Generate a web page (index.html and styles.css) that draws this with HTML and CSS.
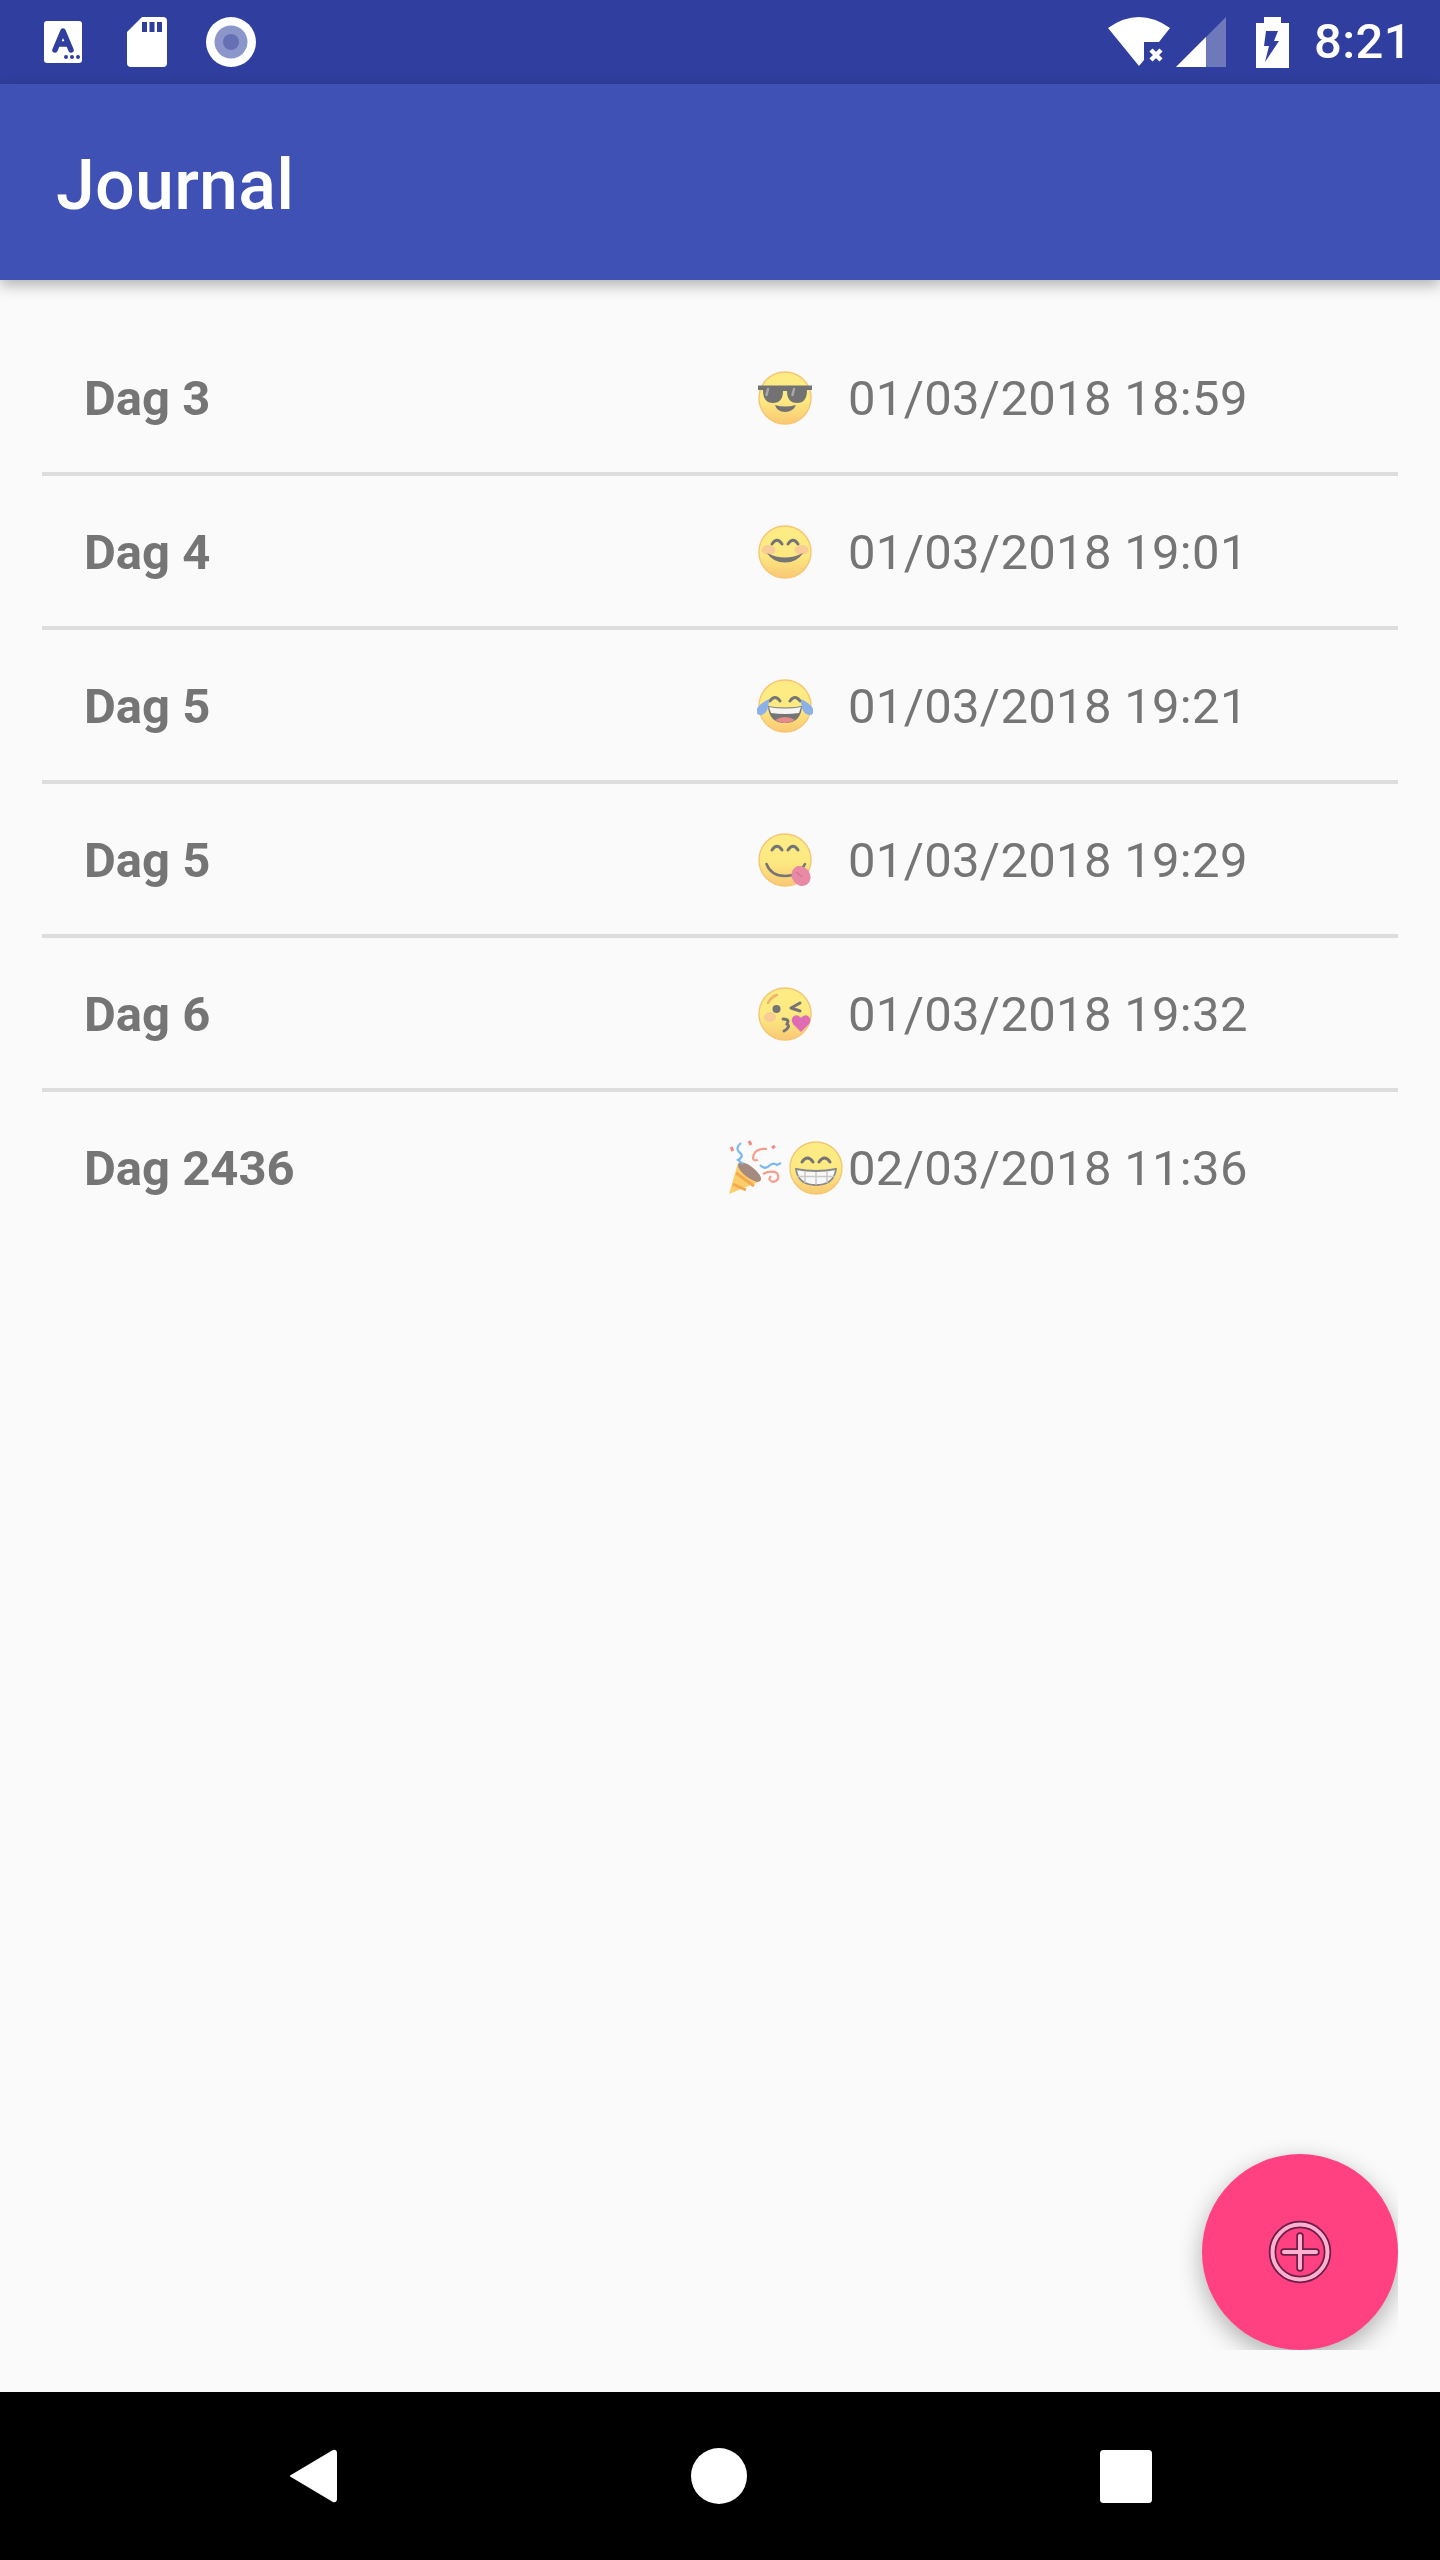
FILE: index.html
```html
<!DOCTYPE html>
<html>
<head>
    <meta charset="UTF-8" />
    <title>Journal</title>
    <link rel="stylesheet" href="styles.css">
</head>
<body>
    <svg class="defs" width="0" height="0">
        <defs>
            <linearGradient id="skin" x1="0" y1="0" x2="0" y2="1">
                <stop offset="0" stop-color="#fdec85"/>
                <stop offset="0.55" stop-color="#fde981"/>
                <stop offset="1" stop-color="#f9c873"/>
            </linearGradient>
            <symbol id="face" viewBox="0 0 56 56">
                <circle cx="28" cy="28" r="26" fill="url(#skin)" stroke="#f6c574" stroke-width="1.4"/>
            </symbol>
        </defs>
    </svg>

    <div id="phone">
        <div class="status-bar">
            <div class="status-left">
                <!-- keyboard -->
                <svg class="ic-kbd" width="38" height="42" viewBox="0 0 38 42">
                    <rect width="38" height="42" rx="3" fill="#fff"/>
                    <path d="M11 29 L19 10 L27 29 M14 23 H24" fill="none" stroke="#303f9f" stroke-width="5.5" stroke-linecap="round" stroke-linejoin="round"/>
                    <circle cx="22" cy="36" r="2" fill="#303f9f"/>
                    <circle cx="28" cy="36" r="2" fill="#303f9f"/>
                    <circle cx="34" cy="36" r="2" fill="#303f9f"/>
                </svg>
                <!-- sd card -->
                <svg class="ic-sd" width="40" height="50" viewBox="0 0 40 50">
                    <path d="M15 0 H36 Q40 0 40 4 V46 Q40 50 36 50 H4 Q0 50 0 46 V15 Z" fill="#fff"/>
                    <rect x="15" y="5" width="5" height="10" fill="#303f9f"/>
                    <rect x="22.500" y="5" width="5" height="10" fill="#303f9f"/>
                    <rect x="30" y="5" width="5" height="10" fill="#303f9f"/>
                </svg>
                <!-- record -->
                <svg class="ic-rec" width="50" height="50" viewBox="0 0 50 50">
                    <circle cx="25" cy="25" r="25" fill="#fff"/>
                    <circle cx="25" cy="25" r="16.500" fill="#8c96cb"/>
                    <circle cx="25" cy="25" r="8" fill="#6570b5"/>
                </svg>
            </div>
            <div class="status-right">
                <!-- wifi -->
                <svg width="62" height="50" viewBox="0 0 62 50">
                    <path d="M0 11 Q31 -11 62 11 L51 25 H36 V43 L31 49 Z" fill="#fff"/>
                    <path d="M43 33 L53 43 M53 33 L43 43" stroke="#fff" stroke-width="4.500"/>
                </svg>
                <!-- signal -->
                <svg class="ic-signal" width="50" height="50" viewBox="0 0 50 50">
                    <path d="M0 50 L50 0 V50 Z" fill="#fff" fill-opacity="0.3"/>
                    <path d="M0 50 L30 20 V50 Z" fill="#fff"/>
                </svg>
                <!-- battery -->
                <svg class="ic-batt" width="33" height="51" viewBox="0 0 33 51">
                    <path d="M8 0 H25 V6 H33 V51 H0 V6 H8 Z" fill="#fff"/>
                    <path d="M10 14 H22 L18 24 H23 L9 45 L13 29 H8 Z" fill="#303f9f"/>
                </svg>
                <span class="clock">8:21</span>
            </div>
        </div>

        <div class="app-bar">Journal</div>

        <div class="main">
            <div class="list">
                <div class="entry">
                    <span class="entry-title">Dag 3</span>
                    <span class="entry-mood">
                        <svg width="56" height="56" viewBox="0 0 56 56">
                            <use href="#face" width="56" height="56"/>
                            <path d="M1 15.500 H55 V20 H50 Q50 33 40 33 Q30 33 30 21 H26 Q26 33 16 33 Q6 33 6 20 H1 Z" fill="#727272"/>
                            <path d="M11 19 Q10 23 9.500 25 M37 19 Q36 23 35.500 25" stroke="#a8a8a8" stroke-width="2.500" fill="none" stroke-linecap="round"/>
                            <path d="M18 35 Q28 38 39 35 Q36 42 28 42 Q20 42 18 35 Z" fill="#727272"/>
                        </svg>
                    </span>
                    <span class="entry-date">01/03/2018 18:59</span>
                </div>
                <div class="entry">
                    <span class="entry-title">Dag 4</span>
                    <span class="entry-mood">
                        <svg width="56" height="56" viewBox="0 0 56 56">
                            <use href="#face" width="56" height="56"/>
                            <ellipse cx="11.500" cy="26" rx="7" ry="5" fill="#f7bfa0" opacity="0.7"/>
                            <ellipse cx="44.500" cy="26" rx="7" ry="5" fill="#f7bfa0" opacity="0.7"/>
                            <path d="M15 20 Q20 12.500 25 20 M31 20 Q36 12.500 41 20" stroke="#757575" stroke-width="3" fill="none" stroke-linecap="round"/>
                            <path d="M10 29 Q28 38 46 29 Q40 38.500 28 38.500 Q16 38.500 10 29 Z" fill="#757575"/>
                        </svg>
                    </span>
                    <span class="entry-date">01/03/2018 19:01</span>
                </div>
                <div class="entry">
                    <span class="entry-title">Dag 5</span>
                    <span class="entry-mood">
                        <svg width="56" height="56" viewBox="0 0 56 56">
                            <use href="#face" width="56" height="56"/>
                            <path d="M13 23 Q18 16 23 23 M33 23 Q38 16 43 23" stroke="#757575" stroke-width="3" fill="none" stroke-linecap="round"/>
                            <path d="M11 28 Q28 31 45 28 Q44 45 28 45 Q12 45 11 28 Z" fill="#757575"/>
                            <path d="M12 29 Q28 32 44 29 L42 35 Q28 37 14 35 Z" fill="#f5f5f5"/>
                            <path d="M18 42 Q28 36 38 42 Q33 45 28 45 Q23 45 18 42 Z" fill="#e88a8a"/>
                            <path d="M12 21 Q3 25 -1 32 Q-1 37 4 37 Q12 36 12 21 Z" fill="#8bb0ea"/>
                            <path d="M44 21 Q53 25 57 32 Q57 37 52 37 Q44 36 44 21 Z" fill="#8bb0ea"/>
                        </svg>
                    </span>
                    <span class="entry-date">01/03/2018 19:21</span>
                </div>
                <div class="entry">
                    <span class="entry-title">Dag 5</span>
                    <span class="entry-mood">
                        <svg width="56" height="56" viewBox="0 0 56 56">
                            <use href="#face" width="56" height="56"/>
                            <path d="M15 18 Q20 10.500 25 18 M31 18 Q36 10.500 41 18" stroke="#757575" stroke-width="3" fill="none" stroke-linecap="round"/>
                            <path d="M9.500 32 Q14 44 28 44 Q42 44 48 32" stroke="#757575" stroke-width="2.500" fill="none" stroke-linecap="round"/>
                            <ellipse cx="44" cy="44" rx="9" ry="10.500" transform="rotate(-35 44 44)" fill="#e88aa6"/>
                            <path d="M39 40 L45 45" stroke="#d87595" stroke-width="1.500"/>
                        </svg>
                    </span>
                    <span class="entry-date">01/03/2018 19:29</span>
                </div>
                <div class="entry">
                    <span class="entry-title">Dag 6</span>
                    <span class="entry-mood">
                        <svg width="56" height="56" viewBox="0 0 56 56">
                            <use href="#face" width="56" height="56"/>
                            <ellipse cx="13" cy="31" rx="6" ry="5" fill="#f7bfa0" opacity="0.7"/>
                            <path d="M11 17 Q14 11 20 9" stroke="#f2b26a" stroke-width="2.500" fill="none" stroke-linecap="round"/>
                            <circle cx="19.500" cy="23" r="4" fill="#757575"/>
                            <path d="M43 17 L34 22 L43 25" stroke="#757575" stroke-width="3" fill="none" stroke-linecap="round" stroke-linejoin="round"/>
                            <path d="M26 33 Q33 33 30 38 Q34 41 27 45" stroke="#757575" stroke-width="3" fill="none" stroke-linecap="round"/>
                            <path d="M44 46 L36 38 Q33 33 37 30 Q41 28 44 32 Q47 28 51 30 Q55 33 52 38 Z" fill="#df6bb5"/>
                        </svg>
                    </span>
                    <span class="entry-date">01/03/2018 19:32</span>
                </div>
                <div class="entry">
                    <span class="entry-title">Dag 2436</span>
                    <span class="entry-mood">
                        <svg width="56" height="56" viewBox="0 0 56 56">
                            <path d="M2 54 L11 23 L34 41 Z" fill="#fbce6b"/>
                            <path d="M6 44 L19 50 M9 33 L27 46" stroke="#f4a94e" stroke-width="3"/>
                            <ellipse cx="22.500" cy="32" rx="5.500" ry="14" transform="rotate(-52 22.500 32)" fill="#a58a7f"/>
                            <path d="M4 7 L6 11 M22 1 L24 5 M45 8 L48 6" stroke="#ef8e7e" stroke-width="3"/>
                            <path d="M14 3 Q8 8 12 12 Q18 16 11 20 L16 24" stroke="#79b8f0" stroke-width="2.200" fill="none"/>
                            <path d="M33 25 Q38 30 42 26 Q46 22 50 25 L54 23" stroke="#79b8f0" stroke-width="2.200" fill="none"/>
                            <path d="M40 9 Q30 8 27 14 Q24 22 31 20 M36 34 Q44 30 50 33 Q54 40 46 42 Q40 40 44 36" stroke="#f79d8a" stroke-width="2.200" fill="none"/>
                        </svg>
                        <svg width="56" height="56" viewBox="0 0 56 56">
                            <use href="#face" width="56" height="56"/>
                            <path d="M14 22 Q19.500 14 25 22 M31 22 Q36.500 14 42 22" stroke="#757575" stroke-width="3" fill="none" stroke-linecap="round"/>
                            <path d="M8 29 Q28 33 48 29 Q46 45 28 45 Q10 45 8 29 Z" fill="#f8f8f8" stroke="#8a8a8a" stroke-width="1.800"/>
                            <path d="M9 36.500 H47 M17 31 V43 M28 32 V45 M39 31 V43" stroke="#c8c8c8" stroke-width="1.500"/>
                        </svg>
                    </span>
                    <span class="entry-date">02/03/2018 11:36</span>
                </div>
            </div>

            <div class="fab">
                <svg width="64" height="64" viewBox="0 0 64 64">
                    <circle cx="32" cy="32" r="27.500" fill="none" stroke="#6b1f48" stroke-width="7.500"/>
                    <circle cx="32" cy="32" r="27.500" fill="none" stroke="#ffb0cf" stroke-width="4"/>
                    <path d="M32 16 V48 M16 32 H48" stroke="#6b1f48" stroke-width="7.500" stroke-linecap="round"/>
                    <path d="M32 16 V48 M16 32 H48" stroke="#ffb0cf" stroke-width="4" stroke-linecap="round"/>
                </svg>
            </div>
        </div>

        <div class="nav-bar">
            <svg width="50" height="56" viewBox="0 0 50 56">
                <path d="M3 28 L45 3 Q48 2 48 5 V51 Q48 54 45 53 Z" fill="#fff" stroke="#fff" stroke-width="2" stroke-linejoin="round"/>
            </svg>
            <svg width="56" height="56" viewBox="0 0 56 56">
                <circle cx="28" cy="28" r="28" fill="#fff"/>
            </svg>
            <svg width="52" height="53" viewBox="0 0 52 53">
                <rect width="52" height="53" rx="3.500" fill="#fff"/>
            </svg>
        </div>
    </div>
</body>
</html>
```

FILE: styles.css
```css
* {
    margin: 0;
    padding: 0;
    box-sizing: border-box;
}
body {
    font-family: Roboto, "Liberation Sans", sans-serif;
    background-color: #fafafa;
}
.defs {
    position: absolute;
}
svg {
    display: block;
    flex: none;
}
#phone {
    width: 1440px;
    height: 2560px;
    display: flex;
    flex-direction: column;
}
.status-bar {
    height: 84px;
    flex: none;
    background-color: #303f9f;
    display: flex;
    justify-content: space-between;
    align-items: center;
    padding: 0 28px 0 44px;
}
.status-left {
    display: flex;
    align-items: center;
}
.ic-kbd {
    margin-right: 45px;
}
.ic-sd {
    margin-right: 39px;
}
.status-right {
    display: flex;
    align-items: center;
}
.ic-signal {
    margin-left: 6px;
}
.ic-batt {
    margin-left: 30px;
}
.clock {
    margin-left: 25px;
    color: white;
    font-size: 49px;
    font-weight: 500;
    line-height: 50px;
    letter-spacing: 0.4px;
}
.app-bar {
    height: 196px;
    flex: none;
    background-color: #3f51b5;
    color: white;
    font-size: 70px;
    font-weight: 500;
    line-height: 202px;
    letter-spacing: 0.2px;
    padding-left: 56px;
    box-shadow: 0 5px 14px rgba(0, 0, 0, 0.3);
    position: relative;
    z-index: 1;
}
.main {
    flex: 1;
    position: relative;
    background-color: #fafafa;
}
.list {
    padding: 42px 42px 0;
}
.entry {
    height: 154px;
    display: flex;
    align-items: center;
    padding-left: 42px;
    padding-top: 2px;
    border-bottom: 4px solid #dddddd;
    color: #757575;
    font-size: 49px;
}
.entry:last-child {
    border-bottom-color: transparent;
}
.entry-title {
    flex: 1;
    font-weight: 700;
}
.entry-mood {
    width: 120px;
    display: flex;
    justify-content: center;
    gap: 5px;
    margin-right: 3px;
}
.entry-date {
    width: 550px;
    letter-spacing: 0.3px;
}
.fab {
    position: absolute;
    right: 42px;
    bottom: 42px;
    width: 196px;
    height: 196px;
    border-radius: 50%;
    background-color: #ff4081;
    box-shadow: 0 8px 24px rgba(0, 0, 0, 0.3);
    clip-path: inset(-40px 0 0 -40px);
    display: flex;
    align-items: center;
    justify-content: center;
}
.nav-bar {
    height: 168px;
    flex: none;
    background-color: black;
    display: flex;
    align-items: center;
    justify-content: space-between;
    padding: 0 288px;
}
```
